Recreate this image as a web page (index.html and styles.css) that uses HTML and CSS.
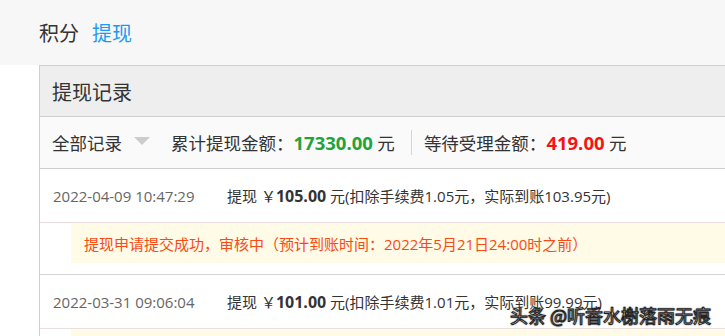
FILE: index.html
```html
<!DOCTYPE html>
<html lang="zh-CN">

<head>
    <meta charset="utf-8" />
    <title>提现记录</title>
    <link rel="stylesheet" href="styles.css">
</head>

<body>
    <div class="tabs">
        <span class="tab">积分</span>
        <span class="tab active">提现</span>
    </div>
    <div class="panel">
        <div class="panel-head">提现记录</div>
        <div class="filter">
            <span class="select">全部记录<i class="caret"></i></span>
            <span class="stat">累计提现金额：<b class="green">17330.00</b> 元</span>
            <span class="sep"></span>
            <span class="stat">等待受理金额：<b class="red">419.00</b> 元</span>
        </div>
        <div class="record">
            <div class="record-row">
                <span class="time">2022-04-09 10:47:29</span>
                <span class="info">提现 ￥<b>105.00</b> 元(扣除手续费1.05元，实际到账103.95元)</span>
            </div>
            <div class="notice">提现申请提交成功，审核中（预计到账时间：2022年5月21日24:00时之前）</div>
        </div>
        <div class="record">
            <div class="record-row">
                <span class="time">2022-03-31 09:06:04</span>
                <span class="info">提现 ￥<b>101.00</b> 元(扣除手续费1.01元，实际到账99.99元)</span>
            </div>
            <div class="notice">提现申请提交成功，审核中（预计到账时间：2022年4月12日24:00时之前）</div>
        </div>
    </div>
    <div class="watermark">头条 @听香水榭落雨无痕</div>
</body>

</html>
```

FILE: styles.css
```css
html {
    overflow: hidden;
}

body {
    margin: 0;
    background: #fff;
    font-family: "Open Sans", "Noto Sans CJK SC", sans-serif;
    color: #333;
}

.tabs {
    height: 65px;
    background: #f7f7f7;
    display: flex;
    align-items: center;
    padding-left: 39px;
    gap: 13px;
}

.tab {
    font-size: 20px;
    color: #333;
}

.tab.active {
    color: #1a9bf0;
}

.panel {
    margin-left: 39px;
    width: 720px;
    border: 1px solid #cfcfcf;
    border-right: none;
}

.panel-head {
    height: 50px;
    background: #eee;
    border-bottom: 1px solid #cfcfcf;
    display: flex;
    align-items: center;
    padding-left: 12px;
    font-size: 20px;
    color: #333;
}

.filter {
    height: 51px;
    background: #fafafa;
    border-bottom: 1px solid #cfcfcf;
    display: flex;
    align-items: center;
    padding-left: 12px;
    font-size: 17.5px;
    color: #333;
}

.select {
    display: flex;
    align-items: center;
}

.caret {
    width: 0;
    height: 0;
    margin-left: 12px;
    border-left: 8px solid transparent;
    border-right: 8px solid transparent;
    border-top: 8px solid #ccc;
    margin-top: -3px;
}

.stat {
    margin-left: 21px;
}

.stat b {
    font-size: 18.5px;
}

.green {
    color: #22a33a;
}

.red {
    color: #f51414;
}

.sep {
    width: 1px;
    height: 25px;
    background: #d6d6d6;
    margin-left: 16px;
    margin-right: -9px;
}

.record {
    border-bottom: 1px solid #d6d6d6;
    padding-bottom: 11px;
}

.record-row {
    height: 53px;
    border-bottom: 1px solid #eadede;
    display: flex;
    align-items: center;
    padding-left: 13px;
    font-size: 15px;
}

.time {
    color: #666;
    width: 174px;
}

.info {
    color: #333;
}

.info b {
    font-size: 16px;
}

.notice {
    margin-left: 31px;
    height: 40px;
    background: #fffbe6;
    display: flex;
    align-items: center;
    padding-left: 13px;
    font-size: 15px;
    color: #fa4a14;
}

.watermark {
    position: absolute;
    left: 510px;
    top: 302px;
    white-space: nowrap;
    font-size: 18px;
    color: #fff;
    -webkit-text-stroke: 1px #222;
    text-shadow: 0 0 2px #000;
    font-family: "Noto Sans CJK SC", sans-serif;
}
```
